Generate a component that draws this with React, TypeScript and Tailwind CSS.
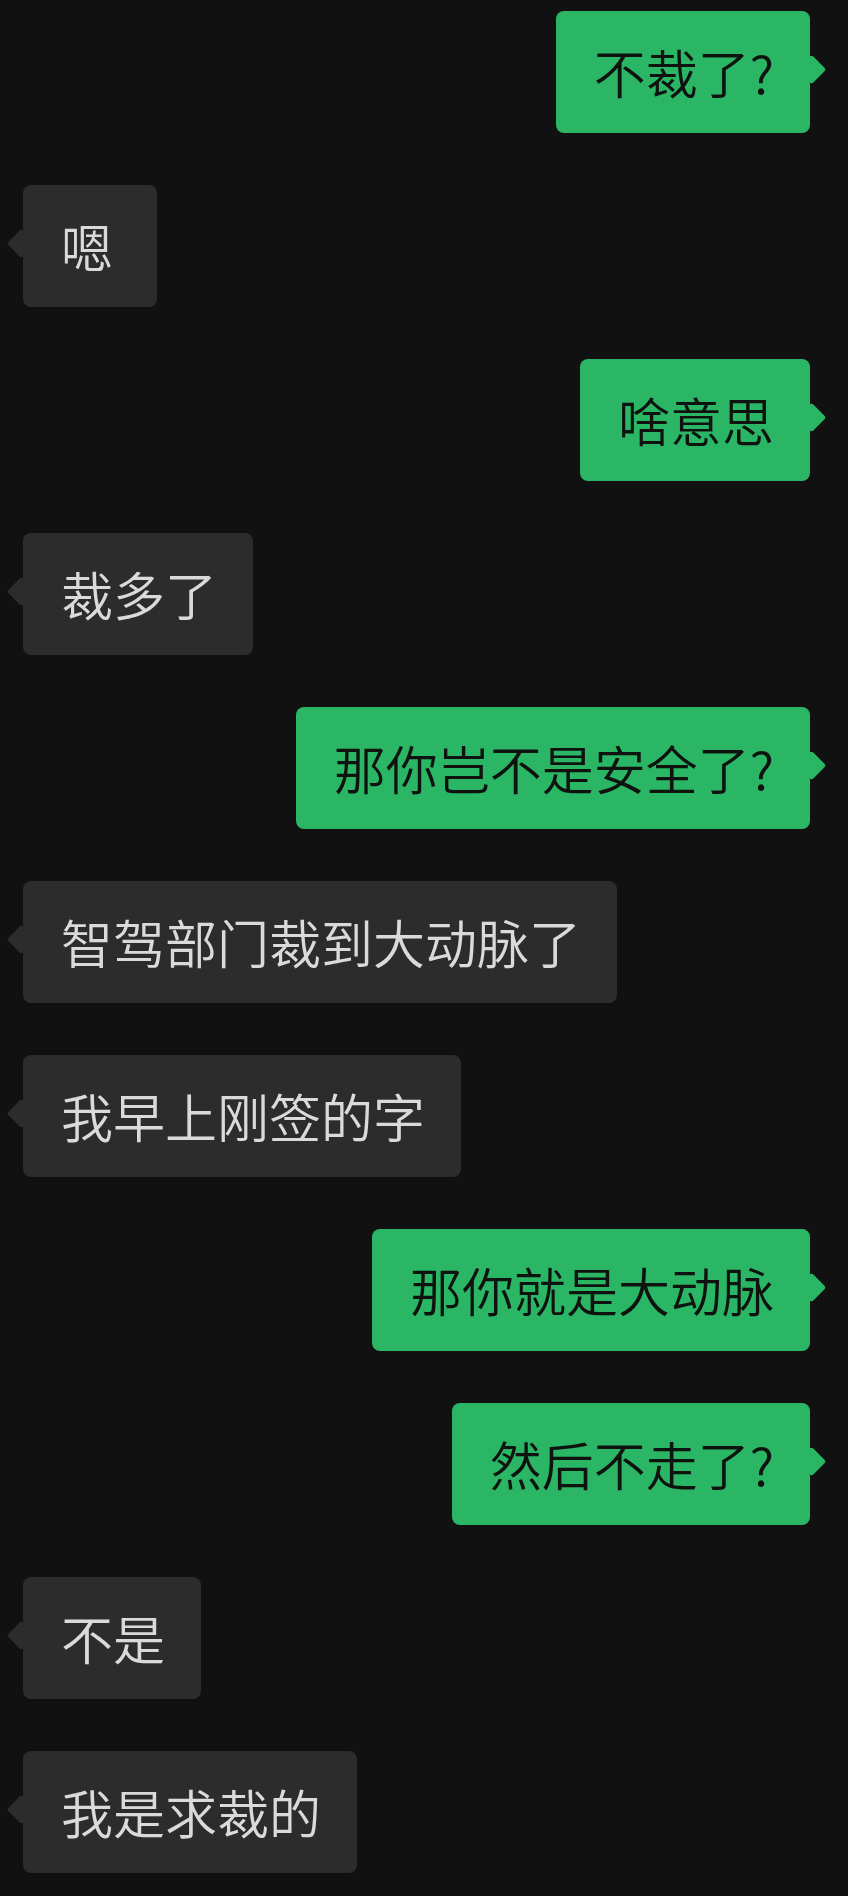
import React from "react";

type Msg = { text: string; mine: boolean };

const messages: Msg[] = [
  { text: "不裁了?", mine: true },
  { text: "嗯", mine: false },
  { text: "啥意思", mine: true },
  { text: "裁多了", mine: false },
  { text: "那你岂不是安全了?", mine: true },
  { text: "智驾部门裁到大动脉了", mine: false },
  { text: "我早上刚签的字", mine: false },
  { text: "那你就是大动脉", mine: true },
  { text: "然后不走了?", mine: true },
  { text: "不是", mine: false },
  { text: "我是求裁的", mine: false },
];

const Bubble: React.FC<{ msg: Msg }> = ({ msg }) => {
  const mine = msg.mine;
  return (
    <div className={`flex ${mine ? "justify-end pr-[38px]" : "justify-start pl-[23px]"}`}>
      <div
        className={`relative h-[122px] min-w-[134px] flex items-center pl-[38px] pr-9 rounded-lg ${
          mine ? "bg-[#2ab664] text-[#0f130f]" : "bg-[#2c2c2c] text-[#dadada]"
        }`}
      >
        {/* tail */}
        <span
          className={`absolute top-[48px] w-[21px] h-[21px] rotate-45 rounded-[3px] ${
            mine ? "right-[-12px] bg-[#2ab664]" : "left-[-12px] bg-[#2c2c2c]"
          }`}
        />
        <span className="relative text-[52px] leading-[58px] font-[350] whitespace-nowrap">{msg.text}</span>
      </div>
    </div>
  );
};

export default function App() {
  return (
    <div
      className="min-h-[1896px] w-full bg-[#111111] pt-[11px] flex flex-col gap-[52px]"
      style={{ fontFamily: '"Noto Sans CJK SC", "Noto Sans", sans-serif' }}
    >
      {messages.map((m, i) => (
        <Bubble key={i} msg={m} />
      ))}
    </div>
  );
}
